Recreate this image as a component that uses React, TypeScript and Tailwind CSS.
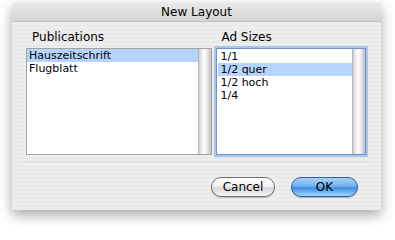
import React from 'react'

const font = { fontFamily: '"DejaVu Sans", "Liberation Sans", sans-serif' }

const publications = ['Hauszeitschrift', 'Flugblatt']
const adSizes = ['1/1', '1/2 quer', '1/2 hoch', '1/4']

function Track() {
  return (
    <div className="w-[13px] shrink-0 border-l border-[#b8b8b8] bg-[linear-gradient(to_right,#cfcfcf_0%,#efefef_25%,#ffffff_45%,#ececec_65%,#bdbdbd_100%)]" />
  )
}

function ListBox({ items, selected, focused }: { items: string[]; selected: number; focused?: boolean }) {
  return (
    <div
      className={
        focused
          ? 'flex h-[107px] border border-[#6f93c9] bg-white shadow-[0_0_0_2px_#a9c6ec]'
          : 'flex h-[107px] border border-[#a3a3a3] bg-white'
      }
    >
      <div className={focused ? 'flex-1 pt-px pl-px' : 'flex-1'}>
        {items.map((item, i) => (
          <div
            key={item}
            className={
              i === selected
                ? 'h-[13px] bg-[#b5d5ff] text-[11px] leading-[13px] text-black pl-[2px]'
                : 'h-[13px] text-[11px] leading-[13px] text-black pl-[2px]'
            }
          >
            {item}
          </div>
        ))}
      </div>
      <Track />
    </div>
  )
}

export default function App() {
  return (
    <div className="w-[395px] h-[226px] bg-white pl-[12px] pt-[3px] overflow-hidden" style={font}>
      <div className="w-[369px] h-[207px] flex flex-col bg-[#ececec] bg-[repeating-linear-gradient(to_bottom,#eeeeee_0px,#eeeeee_2px,#e9e9e9_2px,#e9e9e9_4px)] shadow-[0_5px_12px_rgba(0,0,0,0.35)]">
        <div className="h-[19px] shrink-0 flex items-center justify-center border-b border-[#c2c2c2] bg-[linear-gradient(to_bottom,#e9e9e9,#d4d4d4)] text-[12px] text-black">
          New Layout
        </div>

        <div className="flex pl-[14px] pr-[13px] pt-[8px] gap-[3px]">
          <div className="w-[187px] flex flex-col">
            <div className="h-[14px] leading-[14px] text-[12px] text-black pl-[6px] mb-[4px]">Publications</div>
            <ListBox items={publications} selected={0} />
          </div>
          <div className="w-[150px] flex flex-col ml-[1px] mr-[2px]">
            <div className="h-[14px] leading-[14px] text-[12px] text-black pl-[5px] mb-[4px]">Ad Sizes</div>
            <ListBox items={adSizes} selected={1} focused />
          </div>
        </div>

        <div className="mx-[12px] mt-[7px] h-[3px] border-t border-[#dcdcdc] bg-[#f5f5f5]" />

        <div className="flex justify-end gap-[16px] pr-[23px] pt-[12px]">
          <button className="w-[64px] h-[20px] rounded-full border border-[#6e6e6e] bg-[linear-gradient(to_bottom,#ffffff_0%,#f2f2f2_45%,#d9d9d9_55%,#f4f4f4_100%)] shadow-[0_1px_1px_rgba(0,0,0,0.2)] text-[12px] leading-[18px] text-black">
            Cancel
          </button>
          <button className="w-[67px] h-[20px] rounded-full border border-[#2d5da8] bg-[linear-gradient(to_bottom,#a9d2f7_0%,#6fb2ee_45%,#3f8de0_55%,#9fd8ff_100%)] shadow-[0_1px_1px_rgba(0,0,0,0.25)] text-[12px] leading-[18px] text-black">
            OK
          </button>
        </div>
      </div>
    </div>
  )
}
